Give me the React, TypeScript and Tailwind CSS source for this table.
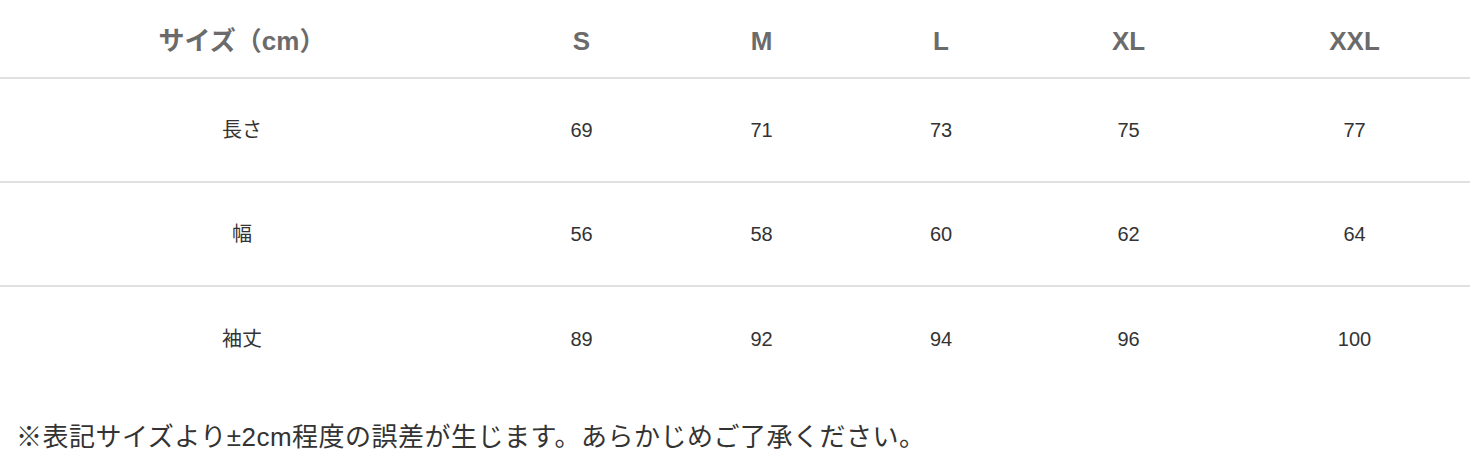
const sizes = ["S", "M", "L", "XL", "XXL"];

const rows = [
  { label: "長さ", values: [69, 71, 73, 75, 77] },
  { label: "幅", values: [56, 58, 60, 62, 64] },
  { label: "袖丈", values: [89, 92, 94, 96, 100] },
];

const cols = "grid grid-cols-[484px_195px_165px_194px_181px_271px]";

export default function App() {
  return (
    <div
      className="w-[1470px] overflow-hidden bg-white"
      style={{ fontFamily: '"Liberation Sans", "Noto Sans CJK JP", sans-serif' }}
    >
      {/* Size table */}
      <div className="w-[1490px]">
        <div className={`${cols} h-[79px] items-center border-b-2 border-[#e0e0e0] pt-[5px] text-[26px] font-bold text-[#6b6b6b]`}>
          <div className="text-center">サイズ（cm）</div>
          {sizes.map((s) => (
            <div key={s} className="text-center">
              {s}
            </div>
          ))}
        </div>
        {rows.map((row, i) => (
          <div
            key={row.label}
            className={`${cols} h-[104px] items-center text-[20px] text-[#333] ${
              i < rows.length - 1 ? "border-b-2 border-[#e0e0e0]" : ""
            }`}
          >
            <div className="text-center">{row.label}</div>
            {row.values.map((v, j) => (
              <div key={j} className="text-center">
                {v}
              </div>
            ))}
          </div>
        ))}
      </div>

      {/* Note */}
      <p className="mt-[28px] pl-4 text-[26px] leading-[36px] tracking-[0.5px] text-[#333]">
        ※表記サイズより±2cm程度の誤差が生じます。あらかじめご了承ください。
      </p>
    </div>
  );
}
